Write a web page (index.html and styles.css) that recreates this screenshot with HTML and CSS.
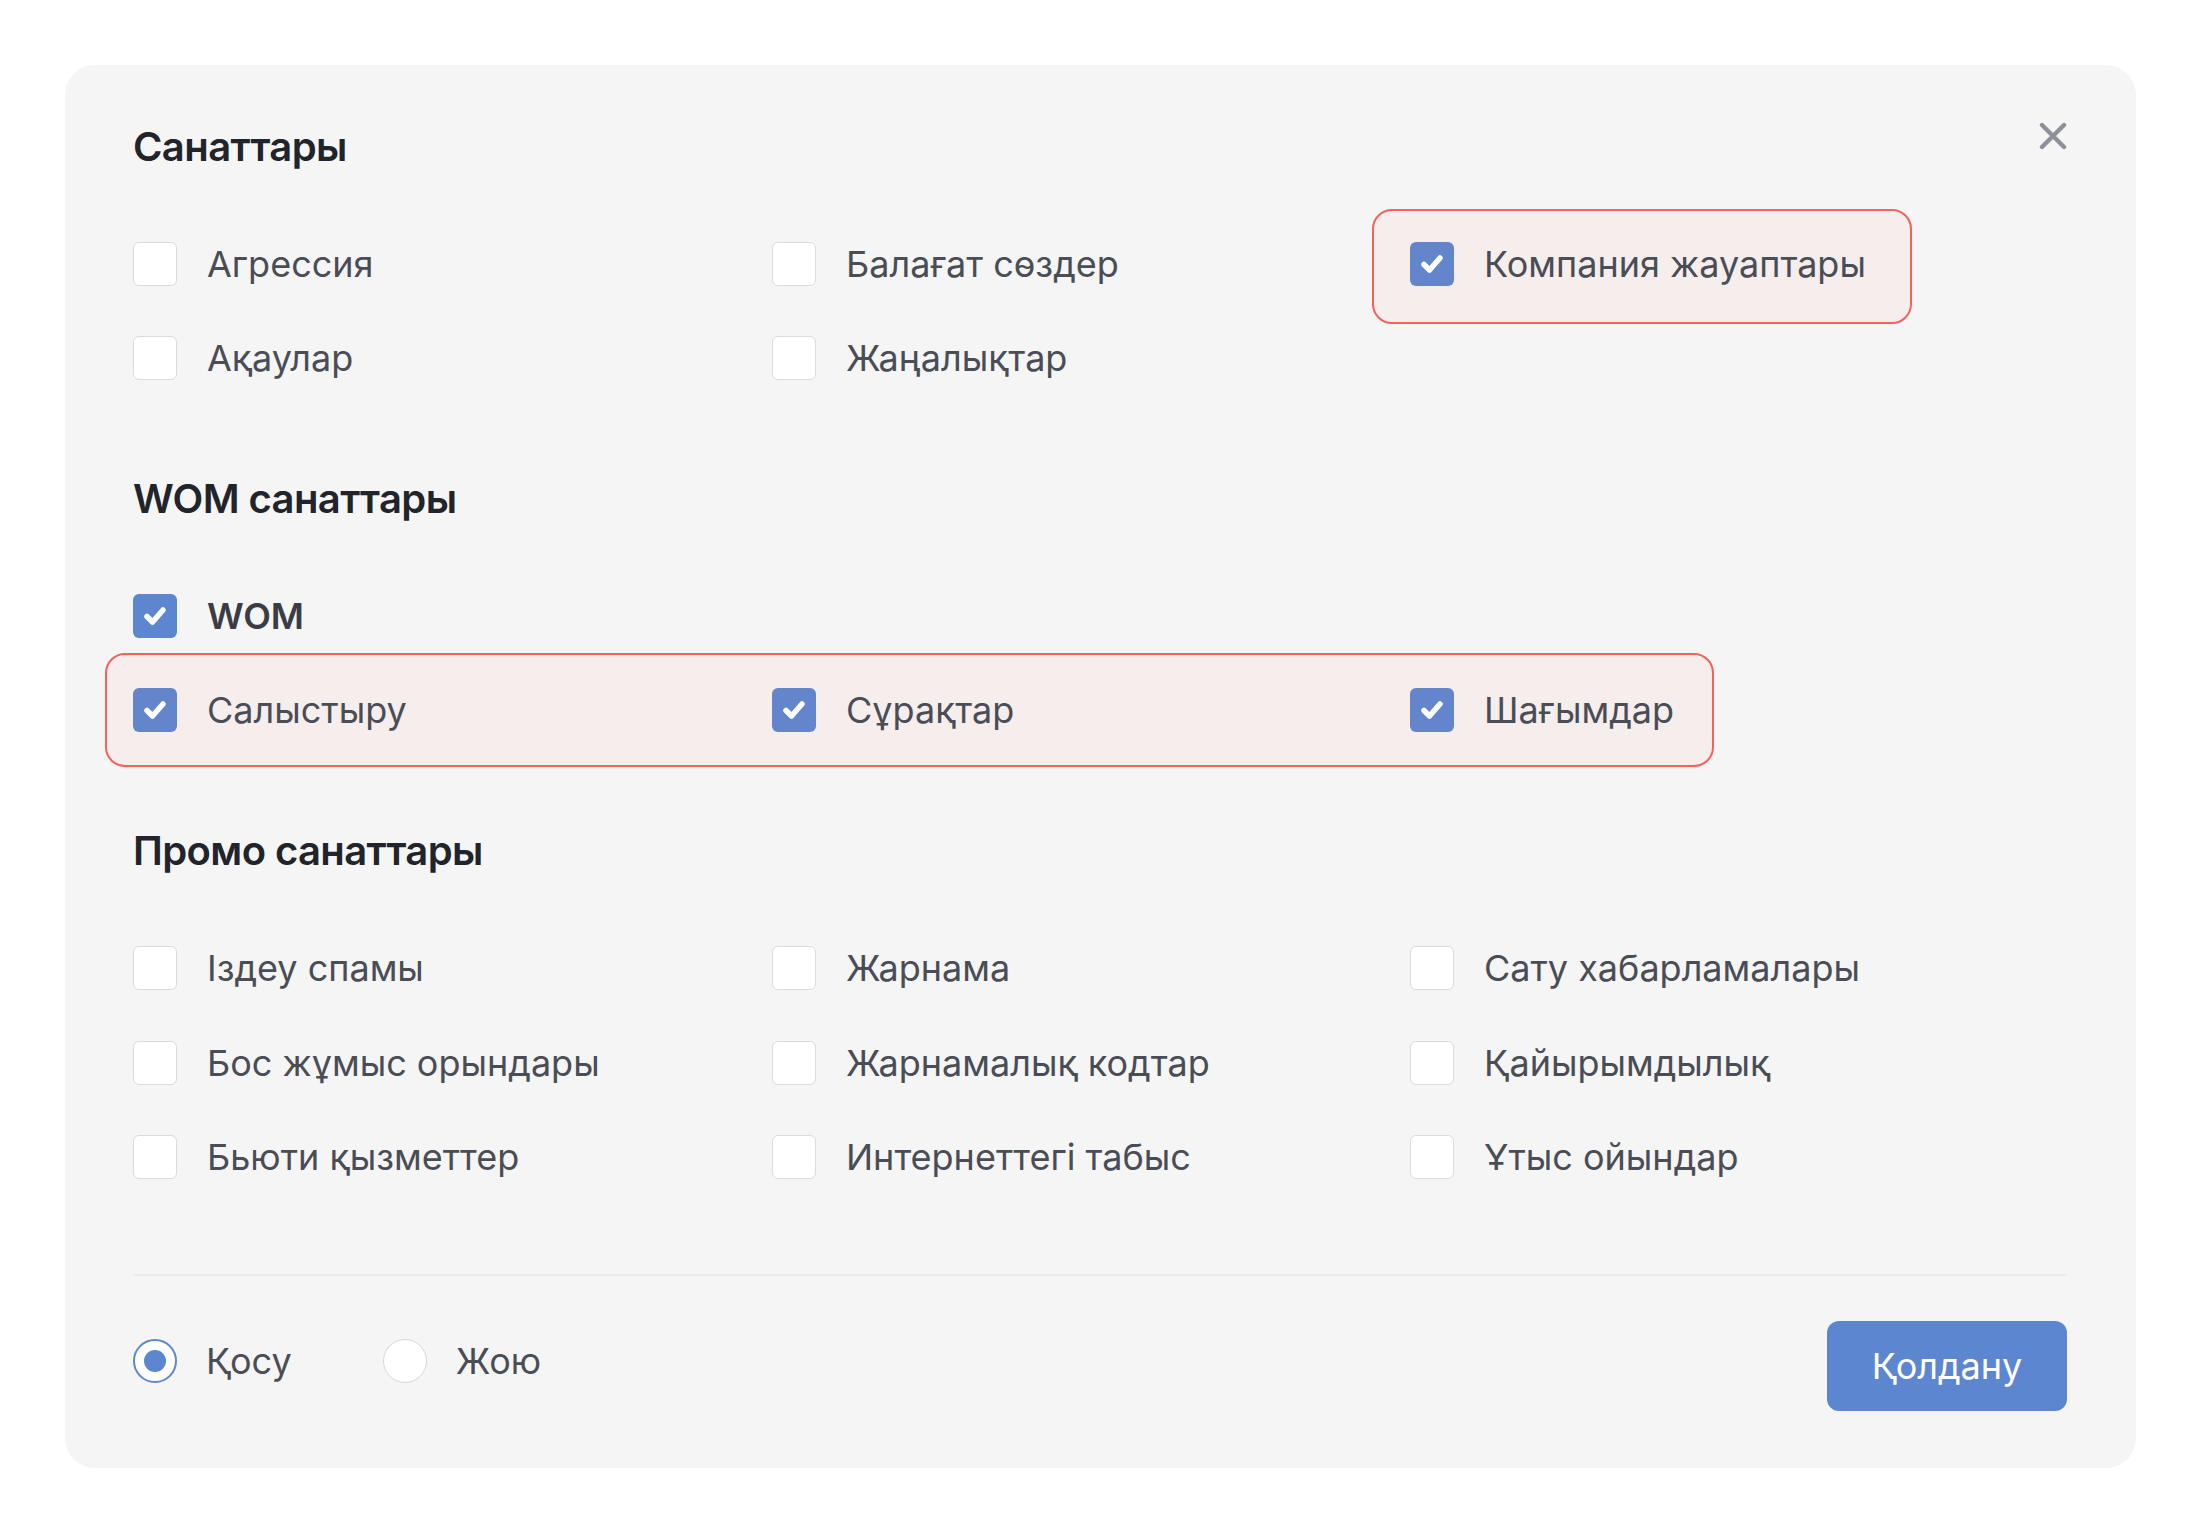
FILE: index.html
```html
<!DOCTYPE html>
<html lang="kk">
<head>
<meta charset="utf-8">
<title>Санаттары</title>
<link rel="stylesheet" href="styles.css">
</head>
<body>
<div class="panel">
  <button class="close" type="button" aria-label="Жабу">
    <svg viewBox="0 0 28 28" width="28" height="28"><path d="M3 3 L25 25 M25 3 L3 25" /></svg>
  </button>

  <section class="section">
    <h2 class="section-title">Санаттары</h2>
    <div class="grid">
      <div class="item"><span class="box"></span><span class="label">Агрессия</span></div>
      <div class="item"><span class="box"></span><span class="label">Балағат сөздер</span></div>
      <div class="item item-hl"><span class="box checked"><svg viewBox="0 0 44 44"><polyline points="14,22.5 19.5,28 30,16"/></svg></span><span class="label">Компания жауаптары</span></div>
      <div class="item"><span class="box"></span><span class="label">Ақаулар</span></div>
      <div class="item"><span class="box"></span><span class="label">Жаңалықтар</span></div>
    </div>
  </section>

  <section class="section section-next">
    <h2 class="section-title">WOM санаттары</h2>
    <div class="stack">
      <div class="item"><span class="box checked"><svg viewBox="0 0 44 44"><polyline points="14,22.5 19.5,28 30,16"/></svg></span><span class="label label-strong">WOM</span></div>
      <div class="hl-row">
        <div class="item"><span class="box checked"><svg viewBox="0 0 44 44"><polyline points="14,22.5 19.5,28 30,16"/></svg></span><span class="label">Салыстыру</span></div>
        <div class="item"><span class="box checked"><svg viewBox="0 0 44 44"><polyline points="14,22.5 19.5,28 30,16"/></svg></span><span class="label">Сұрақтар</span></div>
        <div class="item"><span class="box checked"><svg viewBox="0 0 44 44"><polyline points="14,22.5 19.5,28 30,16"/></svg></span><span class="label">Шағымдар</span></div>
      </div>
    </div>
  </section>

  <section class="section section-next">
    <h2 class="section-title">Промо санаттары</h2>
    <div class="grid grid-promo">
      <div class="item"><span class="box"></span><span class="label">Іздеу спамы</span></div>
      <div class="item"><span class="box"></span><span class="label">Жарнама</span></div>
      <div class="item"><span class="box"></span><span class="label">Сату хабарламалары</span></div>
      <div class="item"><span class="box"></span><span class="label">Бос жұмыс орындары</span></div>
      <div class="item"><span class="box"></span><span class="label">Жарнамалық кодтар</span></div>
      <div class="item"><span class="box"></span><span class="label">Қайырымдылық</span></div>
      <div class="item"><span class="box"></span><span class="label">Бьюти қызметтер</span></div>
      <div class="item"><span class="box"></span><span class="label">Интернеттегі табыс</span></div>
      <div class="item"><span class="box"></span><span class="label">Ұтыс ойындар</span></div>
    </div>
  </section>

  <div class="divider"></div>

  <div class="footer">
    <div class="radios">
      <div class="radio-item"><span class="radio selected"></span><span class="label">Қосу</span></div>
      <div class="radio-item"><span class="radio"></span><span class="label">Жою</span></div>
    </div>
    <button class="apply" type="button">Қолдану</button>
  </div>
</div>
</body>
</html>
```

FILE: styles.css
```css
* { box-sizing: border-box; }

html, body {
  margin: 0;
  padding: 0;
  background: #ffffff;
}

body {
  font-family: Inter, "Noto Sans", "Liberation Sans", sans-serif;
  color: #4a4d56;
}

.panel {
  position: relative;
  margin: 65px 64px 65px 65px;
  padding: 58px 69px 57px 68px;
  background: #f5f5f5;
  border-radius: 30px;
}

.close {
  position: absolute;
  top: 57px;
  right: 69px;
  width: 28px;
  height: 28px;
  padding: 0;
  border: 0;
  background: transparent;
  cursor: pointer;
}

.close svg {
  display: block;
  fill: none;
  stroke: #8d909b;
  stroke-width: 4.4;
  stroke-linecap: round;
}

.section-title {
  margin: 0 0 71px 0;
  font-size: 40px;
  line-height: 48px;
  font-weight: 600;
  letter-spacing: -0.6px;
  color: #21242a;
}

.section-next {
  margin-top: 95px;
}

.grid {
  display: grid;
  grid-template-columns: 639px 638px 1fr;
  row-gap: 50px;
  align-items: start;
}

.grid-promo {
  row-gap: 50.5px;
}

.stack {
  display: flex;
  flex-direction: column;
  align-items: flex-start;
  gap: 50px;
}

.item {
  display: flex;
  align-items: center;
  gap: 30px;
  height: 44px;
  justify-self: start;
}

.box {
  flex: none;
  display: block;
  width: 44px;
  height: 44px;
  border: 1.5px solid #d8dbe1;
  border-radius: 6px;
  background: #ffffff;
}

.box.checked {
  border: 0;
  background: #5c86cf;
}

.box svg {
  display: block;
  width: 44px;
  height: 44px;
  fill: none;
  stroke: #ffffff;
  stroke-width: 5.5;
  stroke-linecap: round;
  stroke-linejoin: round;
}

.label {
  font-size: 36px;
  line-height: 44px;
  font-weight: 400;
  color: #4a4d56;
  white-space: nowrap;
}

.label-strong {
  font-weight: 600;
  color: #3a3d45;
}

.item-hl {
  height: auto;
  margin: -33px -46px -38px -38px;
  padding: 31px 44px 36px 36px;
  border: 2px solid #f3625b;
  border-radius: 20px;
  background: #f6eded;
}

.item-hl .box.checked,
.hl-row .box.checked {
  background: #6285cb;
}

.hl-row {
  display: grid;
  grid-template-columns: 639px 638px auto;
  width: max-content;
  margin: -35px 0 -35px -28px;
  padding: 33px 38px 33px 26px;
  border: 2px solid #f3625b;
  border-radius: 20px;
  background: #f6eded;
}

.divider {
  margin-top: 95px;
  height: 2px;
  background: #ebebed;
}

.footer {
  display: flex;
  align-items: center;
  justify-content: space-between;
  padding-top: 45px;
}

.radios {
  display: flex;
  align-items: center;
  gap: 91px;
  margin-bottom: 10px;
}

.radio-item {
  display: flex;
  align-items: center;
  gap: 29px;
}

.radio {
  flex: none;
  position: relative;
  width: 44px;
  height: 44px;
  border: 1.5px solid #d5d8df;
  border-radius: 50%;
  background: #ffffff;
}

.radio.selected {
  border: 2px solid #5c86cf;
}

.radio.selected::after {
  content: "";
  position: absolute;
  left: 50%;
  top: 50%;
  width: 22px;
  height: 22px;
  margin: -11px 0 0 -11px;
  border-radius: 50%;
  background: #5c86cf;
}

.apply {
  width: 240px;
  height: 90px;
  border: 0;
  border-radius: 12px;
  background: #5c86cf;
  color: #ffffff;
  font-family: Inter, "Noto Sans", "Liberation Sans", sans-serif;
  font-size: 36px;
  font-weight: 400;
  cursor: pointer;
}
```
